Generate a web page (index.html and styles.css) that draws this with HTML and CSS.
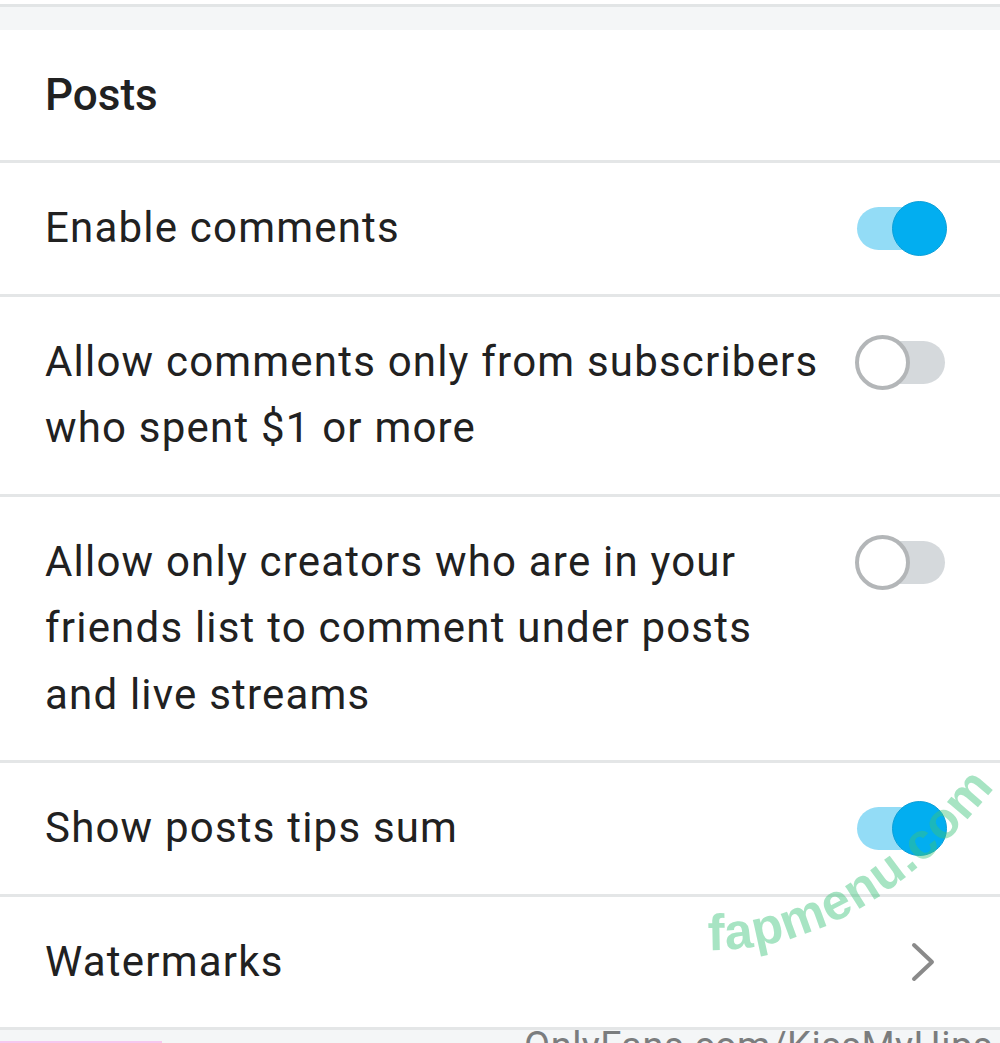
FILE: index.html
```html
<!DOCTYPE html>
<html lang="en">
<head>
    <meta charset="UTF-8">
    <meta name="viewport" content="width=device-width, initial-scale=1.0">
    <title>Posts Settings</title>
    <link rel="stylesheet" href="styles.css">
</head>
<body>
    <div class="topbar"></div>

    <div class="settings">
        <div class="section-title">Posts</div>

        <div class="row">
            <div class="label">Enable comments</div>
            <span class="switch on"><span class="track"></span><span class="thumb"></span></span>
        </div>

        <div class="row">
            <div class="label">Allow comments only from subscribers who spent $1 or more</div>
            <span class="switch"><span class="track"></span><span class="thumb"></span></span>
        </div>

        <div class="row">
            <div class="label">Allow only creators who are in your friends list to comment under posts and live streams</div>
            <span class="switch"><span class="track"></span><span class="thumb"></span></span>
        </div>

        <div class="row">
            <div class="label">Show posts tips sum</div>
            <span class="switch on"><span class="track"></span><span class="thumb"></span></span>
        </div>

        <div class="row link">
            <div class="label">Watermarks</div>
            <svg class="chevron" width="24" height="40" viewBox="0 0 24 40">
                <polyline points="3,3 21,20 3,37" fill="none" stroke="#8a8a8a" stroke-width="4" stroke-linecap="round" stroke-linejoin="round"/>
            </svg>
        </div>
    </div>

    <div class="footer">
        <span class="pink"></span>
        <span class="site">OnlyFans.com/KissMyHips</span>
    </div>

    <!-- watermark over the list -->
    <svg class="stamp" width="1000" height="1043" viewBox="0 0 1000 1043">
        <defs>
            <path id="arc" d="M708,950 Q870,952 1008,770"/>
        </defs>
        <text class="stamp-text"><textPath href="#arc">fapmenu.com</textPath></text>
    </svg>
</body>
</html>
```

FILE: styles.css
```css
body {
    font-family: 'Roboto', sans-serif;
    margin: 0;
    padding: 0;
    height: 1043px;
    overflow: hidden;
    background: #ffffff;
    color: #212121;
    position: relative;
}

.topbar {
    margin-top: 4px;
    height: 23px;
    background: #f4f6f7;
    border-top: 3px solid #e2e5e6;
}

.section-title {
    font-size: 44px;
    font-weight: 500;
    line-height: 66px;
    padding: 32px 45px;
    border-bottom: 3px solid #e4e6e7;
}

.row {
    display: flex;
    align-items: flex-start;
    gap: 30px;
    padding: 32px 53px 32px 45px;
    border-bottom: 3px solid #e4e6e7;
}

.label {
    flex: 1;
    font-size: 42px;
    letter-spacing: 1.2px;
    line-height: 66.5px;
}

/* Switch: track with the round thumb over it */
.switch {
    position: relative;
    flex: none;
    width: 92px;
    height: 55px;
    margin-top: 6px;
}

.track {
    position: absolute;
    left: 2px;
    top: 6px;
    width: 88px;
    height: 43px;
    border-radius: 22px;
    background: #d5d9dc;
}

.thumb {
    position: absolute;
    left: 0;
    top: 0;
    width: 47px;
    height: 47px;
    border-radius: 50%;
    background: #ffffff;
    border: 4px solid #b3b6b8;
}

.switch.on .track {
    background: #93dcf6;
}

.switch.on .thumb {
    left: auto;
    right: 0;
    width: 53px;
    height: 53px;
    border: 1px solid #0b9fd8;
    background: #02aef0;
}

.row.link {
    align-items: center;
}

.chevron {
    flex: none;
    margin-right: 12px;
}

.footer {
    position: relative;
    height: 40px;
    background: #f4f6f7;
    overflow: hidden;
}

.site {
    position: absolute;
    left: 524px;
    top: -8px;
    font-size: 38px;
    line-height: 48px;
    color: #7b7d7e;
    letter-spacing: 0.5px;
}

.pink {
    position: absolute;
    left: 0;
    top: 11px;
    width: 162px;
    height: 4px;
    background: #f7c6ee;
}

.stamp {
    position: absolute;
    left: 0;
    top: 0;
    pointer-events: none;
}

.stamp-text {
    font-family: 'Liberation Sans', Arial, sans-serif;
    font-weight: 700;
    font-size: 51px;
    letter-spacing: 1px;
    fill: #3cc47a;
    fill-opacity: 0.45;
}
```
